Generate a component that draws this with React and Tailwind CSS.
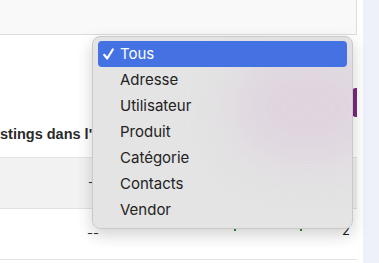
const options = [
  "Tous",
  "Adresse",
  "Utilisateur",
  "Produit",
  "Catégorie",
  "Contacts",
  "Vendor",
];

const App = () => {
  return (
    <div className="relative flex w-[379px] h-[263px] overflow-hidden bg-white font-['Inter',sans-serif]">
      {/* Main column */}
      <div className="w-[357px] flex flex-col">
        <div className="h-[35px] bg-[#f9f9f9] border-b border-r border-[#dcdcdc]" />

        <div className="relative h-[122px]">
          <div className="absolute right-0 top-[53px] w-[5px] h-[29px] rounded-l bg-[#7a2a80]" />
          <div className="absolute left-0 top-[92px] w-[92px] overflow-hidden">
            <p className="text-[14.5px] font-bold font-['Liberation_Sans',sans-serif] text-[#2a2a2a] whitespace-nowrap leading-none">
              stings dans l'
            </p>
          </div>
        </div>

        {/* Table */}
        <div className="border-t border-[#e2e2e2]">
          <div className="h-[51px] bg-[#f2f2f2] border-b border-[#e2e2e2] flex items-center pl-[88px]">
            <span className="text-[13px] text-[#333]">-</span>
          </div>
          <div className="h-[51px] border-b border-[#e2e2e2] relative">
            <span className="absolute left-[87px] top-[15px] text-[13px] text-[#333]">--</span>
            <span className="absolute left-[234px] top-[20px] w-[2px] h-[2px] bg-[#2a8a3a]" />
            <span className="absolute left-[300px] top-[20px] w-[2px] h-[2px] bg-[#2a8a3a]" />
            <span className="absolute left-[342px] top-[12px] text-[13px] text-[#222]">2</span>
          </div>
        </div>
      </div>

      <div className="w-[6px]" />
      <div className="flex-1 bg-[#eef1f9]" />

      {/* Native select popup */}
      <div className="absolute left-[92px] top-[36px] w-[261px] h-[193px] rounded-[8px] shadow-[0_6px_16px_rgba(0,0,0,0.18)]">
        <div className="relative w-full h-full rounded-[8px] bg-[#e4e4e4] border border-[#c9c9c9] overflow-hidden px-[5px] py-[4px]">
          <div className="absolute left-[140px] top-[15px] w-[150px] h-[110px] rounded-full bg-[#dccadc] blur-[24px] opacity-60" />
          <ul className="relative flex flex-col">
            {options.map((opt, i) => (
              <li
                key={opt}
                className={`h-[26px] flex items-center rounded-[4px] text-[15px] ${
                  i === 0 ? "bg-[#4472e3] text-white" : "text-[#222]"
                }`}
              >
                <span className="w-[22px] pl-[5px] flex items-center">
                  {i === 0 && (
                    <svg width="11" height="12" viewBox="0 0 11 12" fill="none">
                      <path
                        d="M1.2 6.8 L4.2 10.5 L9.8 1.5"
                        stroke="white"
                        strokeWidth="2.2"
                        strokeLinecap="round"
                        strokeLinejoin="round"
                      />
                    </svg>
                  )}
                </span>
                {opt}
              </li>
            ))}
          </ul>
        </div>
      </div>
    </div>
  );
};

export default App;
